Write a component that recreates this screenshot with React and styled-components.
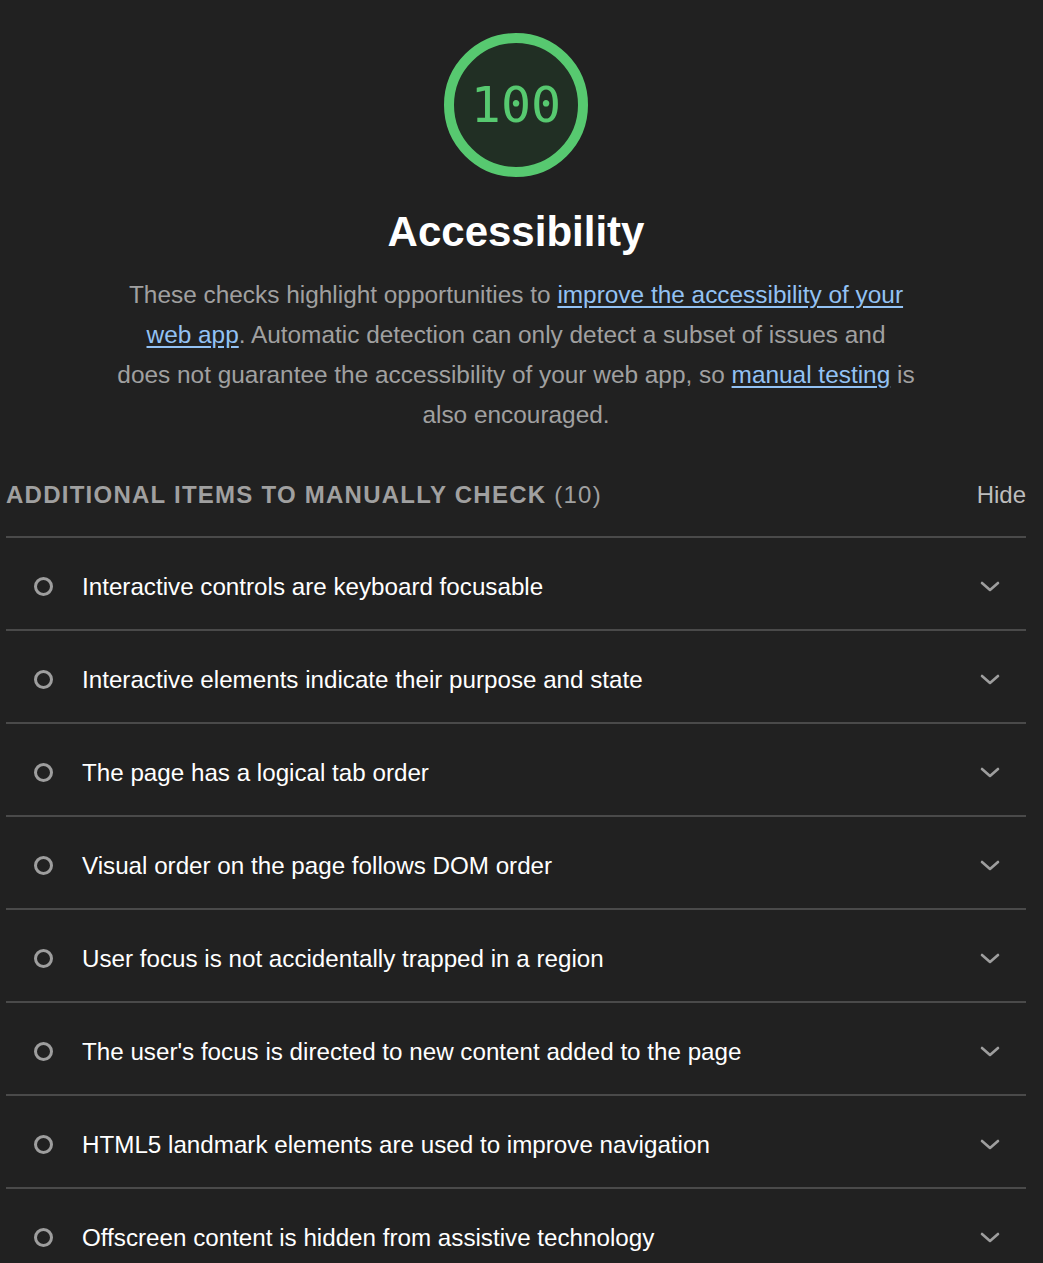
import React from "react";
import styled, { createGlobalStyle } from "styled-components";

const Global = createGlobalStyle`
  html, body { margin: 0; padding: 0; background: #212121; }
  body { font-family: "Liberation Sans", Arial, Helvetica, sans-serif; color: #f5f5f5; }
`;

const Page = styled.div`
  width: 1020px;
  padding: 33px 17px 0 6px;
  box-sizing: content-box;
  height: 1230px;
  overflow: hidden;
`;

const Header = styled.div`
  display: flex;
  flex-direction: column;
  align-items: center;
`;

const Gauge = styled.div`
  width: 144px;
  height: 144px;
  box-sizing: border-box;
  border-radius: 50%;
  border: 10px solid #57c970;
  background: #212f24;
  display: flex;
  align-items: center;
  justify-content: center;
  color: #57c970;
  font-family: "DejaVu Sans Mono", "Liberation Mono", monospace;
  font-size: 50px;
`;

const Title = styled.h1`
  margin: 27px 0 0;
  font-size: 42px;
  font-weight: 700;
  line-height: 56px;
  color: #ffffff;
`;

const Desc = styled.p`
  margin: 15px 0 0;
  width: 798px;
  text-align: center;
  font-size: 24.4px;
  line-height: 40px;
  color: #a0a0a0;
`;

const Link = styled.a`
  color: #93c2f4;
  text-decoration: underline;
  text-underline-offset: 3px;
`;

const GroupHead = styled.div`
  display: flex;
  align-items: center;
  justify-content: space-between;
  margin-top: 38px;
  height: 44px;
  border-bottom: 2px solid #4a4a4a;
  padding-bottom: 19px;
`;

const GroupTitle = styled.div`
  font-size: 24px;
  font-weight: 700;
  letter-spacing: 1.25px;
  text-transform: uppercase;
  color: #a0a0a0;
`;

const Count = styled.span`
  font-weight: 400;
`;

const Hide = styled.span`
  font-size: 24px;
  color: #bdbdbd;
`;

const Row = styled.div`
  display: flex;
  align-items: center;
  height: 85px;
  padding: 6px 26px 0 28px;
  border-bottom: 2px solid #4a4a4a;
`;

const Dot = styled.span`
  width: 19px;
  height: 19px;
  box-sizing: border-box;
  border-radius: 50%;
  border: 3.5px solid #9e9e9e;
  flex-shrink: 0;
`;

const Label = styled.span`
  flex: 1;
  margin-left: 29px;
  font-size: 24.2px;
  color: #ffffff;
`;

const Chevron = () => (
  <svg width="20" height="12" viewBox="0 0 20 12" fill="none">
    <path d="M2 2 L10 9 L18 2" stroke="#9e9e9e" strokeWidth="2.6" strokeLinecap="round" strokeLinejoin="round" />
  </svg>
);

const items = [
  "Interactive controls are keyboard focusable",
  "Interactive elements indicate their purpose and state",
  "The page has a logical tab order",
  "Visual order on the page follows DOM order",
  "User focus is not accidentally trapped in a region",
  "The user's focus is directed to new content added to the page",
  "HTML5 landmark elements are used to improve navigation",
  "Offscreen content is hidden from assistive technology",
  "Custom controls have associated labels",
  "Custom controls have ARIA roles",
];

export default function App() {
  return (
    <>
      <Global />
      <Page>
        <Header>
          <Gauge>100</Gauge>
          <Title>Accessibility</Title>
          <Desc>
            These checks highlight opportunities to{" "}
            <Link href="#">improve the accessibility of your web app</Link>. Automatic detection can only
            detect a subset of issues and does not guarantee the accessibility of your web app, so{" "}
            <Link href="#">manual testing</Link> is also encouraged.
          </Desc>
        </Header>
        <GroupHead>
          <GroupTitle>
            Additional items to manually check <Count>(10)</Count>
          </GroupTitle>
          <Hide>Hide</Hide>
        </GroupHead>
        {items.map((t) => (
          <Row key={t}>
            <Dot />
            <Label>{t}</Label>
            <Chevron />
          </Row>
        ))}
      </Page>
    </>
  );
}
